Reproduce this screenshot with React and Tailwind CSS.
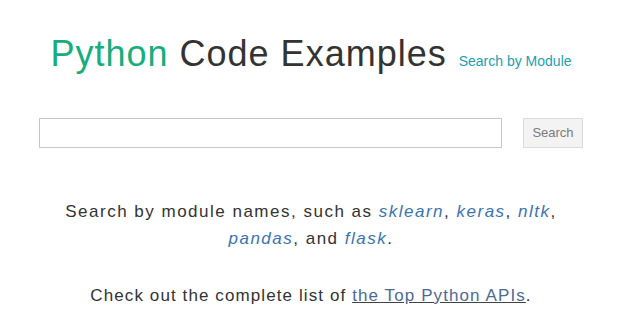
import React from "react";

export default function App() {
  return (
    <div className="min-h-screen bg-white font-['Liberation_Sans',Arial,sans-serif] text-[#333]">
      <div className="mx-auto w-[544px] pt-[34px]">
        {/* title */}
        <div className="flex items-baseline justify-center gap-3">
          <h1 className="text-[36px] leading-[1.1] tracking-[1px]">
            <span className="text-[#17ad7c]">Python</span> Code Examples
          </h1>
          <a href="#" className="text-[14px] text-[#1ba1b1]">
            Search by Module
          </a>
        </div>

        {/* search */}
        <form className="mt-[44px] flex items-center justify-between" onSubmit={(e) => e.preventDefault()}>
          <input
            type="text"
            className="h-[30px] w-[463px] border border-[#c8c8c8] bg-white px-2 text-sm outline-none"
          />
          <button
            type="submit"
            className="h-[30px] w-[60px] border border-[#dcdcdc] bg-[#f3f3f3] text-[13px] text-[#7a7a7a]"
          >
            Search
          </button>
        </form>

        {/* info */}
        <p className="mt-[50px] text-center text-[17px] leading-[27px] tracking-[1.5px]">
          Search by module names, such as <i className="text-[#3b73b0]">sklearn</i>,{" "}
          <i className="text-[#3b73b0]">keras</i>, <i className="text-[#3b73b0]">nltk</i>,{" "}
          <i className="text-[#3b73b0]">pandas</i>, and <i className="text-[#3b73b0]">flask</i>.
        </p>
        <p className="mt-[30px] text-center text-[17px] leading-[27px] tracking-[1.1px]">
          Check out the complete list of{" "}
          <a href="#" className="text-[#4d6a93] underline decoration-[#444]">
            the Top Python APIs
          </a>
          .
        </p>
      </div>
    </div>
  );
}
